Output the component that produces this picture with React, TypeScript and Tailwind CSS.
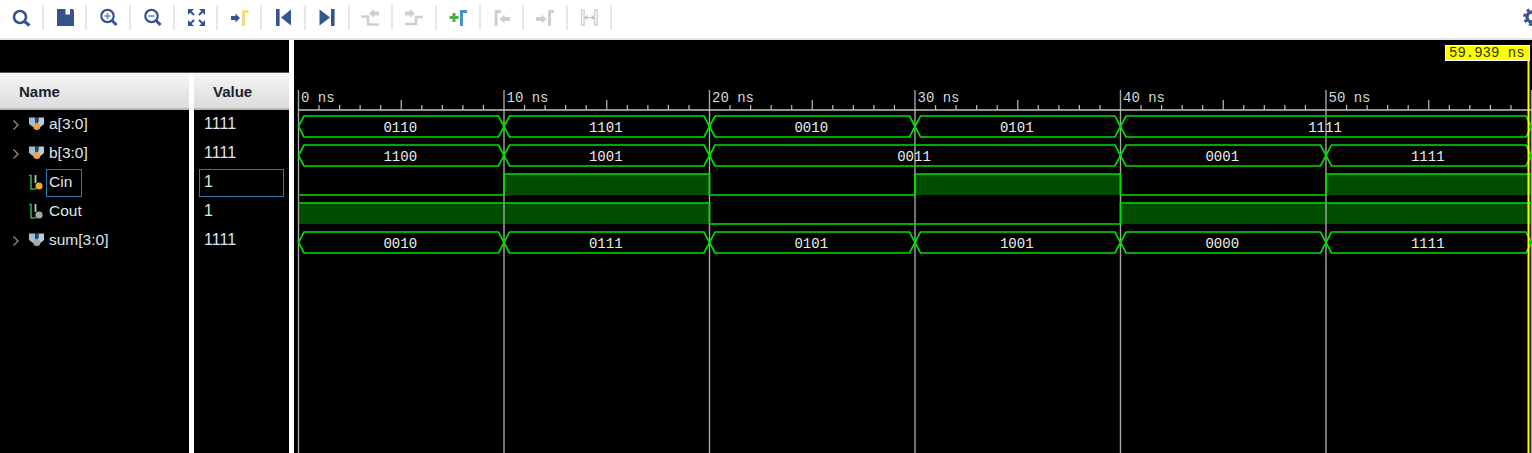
import React from "react";

const BLUE = "#34548f";
const GRAY = "#cfcfcf";

function Ic({ children }: { children: React.ReactNode }) {
  return (
    <svg width="24" height="24" viewBox="0 0 24 24" fill="none" className="block">
      {children}
    </svg>
  );
}

const toolbarIcons: React.ReactNode[] = [
  <Ic>
    <circle cx="11" cy="12" r="6" stroke={BLUE} strokeWidth="2.6" />
    <path d="M15.5 16.5 L20.5 20.5" stroke={BLUE} strokeWidth="3" />
  </Ic>,
  <Ic>
    <path d="M4 4 H20 L21 5.5 V21 H4 Z" fill={BLUE} />
    <rect x="12.5" y="4" width="4.5" height="5.5" fill="#ffffff" />
  </Ic>,
  <Ic>
    <circle cx="11.5" cy="11" r="6.2" stroke={BLUE} strokeWidth="2.2" />
    <path d="M8.5 11 H14.5 M11.5 8 V14" stroke="#6f87b5" strokeWidth="1.6" />
    <path d="M16 15.5 L20.5 20" stroke={BLUE} strokeWidth="3" />
  </Ic>,
  <Ic>
    <circle cx="11.5" cy="11" r="6.2" stroke={BLUE} strokeWidth="2.2" />
    <path d="M8.5 11 H14.5" stroke="#7f93b8" strokeWidth="1.8" />
    <path d="M16 15.5 L20.5 20" stroke={BLUE} strokeWidth="3" />
  </Ic>,
  <Ic>
    <path d="M4 4 H10 L4 10 Z M21 4 H15 L21 10 Z M4 21 H10 L4 15 Z M21 21 H15 L21 15 Z" fill={BLUE} />
    <path d="M6 6 L10 10 M19 6 L15 10 M6 19 L10 15 M19 19 L15 15" stroke={BLUE} strokeWidth="2" />
  </Ic>,
  <Ic>
    <path d="M4 11 H8.5 V8.5 L13 13 L8.5 17.5 V15 H4 Z" fill={BLUE} />
    <path d="M16.5 21 V6.5 H21.5" stroke="#eedc88" strokeWidth="3" />
  </Ic>,
  <Ic>
    <rect x="5" y="4" width="3.6" height="17" fill={BLUE} />
    <path d="M20 4.5 V20.5 L10 12.5 Z" fill={BLUE} />
  </Ic>,
  <Ic>
    <path d="M4.5 4.5 V20.5 L15 12.5 Z" fill={BLUE} />
    <rect x="16" y="4" width="3.6" height="17" fill={BLUE} />
  </Ic>,
  <Ic>
    <path d="M3 11.5 H10 V19.5 H21" stroke={GRAY} strokeWidth="2.6" />
    <path d="M21 6.5 H16 V4 L11 8.5 L16 13 V10.5 H21 Z" fill={GRAY} />
  </Ic>,
  <Ic>
    <path d="M3 19 H14 V12 H21" stroke={GRAY} strokeWidth="2.6" />
    <path d="M3 6.5 H8 V4 L13 8.5 L8 13 V10.5 H3 Z" fill={GRAY} />
  </Ic>,
  <Ic>
    <path d="M3.5 12.5 H12.5 M8 8 V17" stroke="#4ab04a" strokeWidth="3" />
    <path d="M15.5 21 V6.5 H21" stroke="#4a93c4" strokeWidth="3" />
  </Ic>,
  <Ic>
    <path d="M7 21 V6.5 H12" stroke={GRAY} strokeWidth="3" />
    <path d="M21 12 H15.5 V9.5 L10.5 14 L15.5 18.5 V16 H21 Z" fill={GRAY} />
  </Ic>,
  <Ic>
    <path d="M3 12 H8.5 V9.5 L13.5 14 L8.5 18.5 V16 H3 Z" fill={GRAY} />
    <path d="M16.5 21 V6.5 H21" stroke={GRAY} strokeWidth="3" />
  </Ic>,
  <Ic>
    <rect x="4.5" y="5" width="2.6" height="15" stroke={GRAY} strokeWidth="1.4" />
    <rect x="17.5" y="5" width="2.6" height="15" stroke={GRAY} strokeWidth="1.4" />
    <path d="M8 12.5 H17 M8 12.5 L10.5 10.5 M8 12.5 L10.5 14.5 M17 12.5 L14.5 10.5 M17 12.5 L14.5 14.5" stroke="#c0c0c0" strokeWidth="1.1" />
  </Ic>,
];

function BusIcon({ dot }: { dot: string }) {
  return (
    <svg width="17" height="18" viewBox="0 0 17 18" className="block">
      <path d="M1 1.5 H7.2 V5 L8 9 L5 11 L1 8 Z" fill="#9cc0da" />
      <path d="M16 1.5 H10.4 V5 L9.6 9 L12.5 11 L16 8 Z" fill="#b4cfe2" />
      <path d="M7.2 1.5 H10.4 V5 L9.6 8 H8 L7.2 5 Z" fill="#2c4a60" />
      <circle cx="8.8" cy="10.5" r="3.5" fill={dot} />
    </svg>
  );
}

function WireIcon({ dot }: { dot: string }) {
  return (
    <svg width="17" height="18" viewBox="0 0 17 18" className="block">
      <path d="M1 1.5 H3 V15 H8" stroke="#35a845" strokeWidth="1.6" fill="none" />
      <path d="M7.5 1 V9" stroke="#a8d8aa" strokeWidth="1.8" fill="none" />
      <circle cx="11" cy="12" r="3.6" fill={dot} />
    </svg>
  );
}

function Chevron() {
  return (
    <svg width="8" height="12" viewBox="0 0 8 12" className="block">
      <path d="M1.5 1.5 L6 6 L1.5 10.5" stroke="#8a8a8a" strokeWidth="1.4" fill="none" />
    </svg>
  );
}

const ORANGE = "#f2a23a";
const SILVER = "#a8a8a8";

const signals = [
  { name: "a[3:0]", value: "1111", bus: true, dot: ORANGE },
  { name: "b[3:0]", value: "1111", bus: true, dot: ORANGE },
  { name: "Cin", value: "1", bus: false, dot: ORANGE, selected: true },
  { name: "Cout", value: "1", bus: false, dot: SILVER },
  { name: "sum[3:0]", value: "1111", bus: true, dot: SILVER },
];

const X0 = 298.5;
const PX = 20.55;
const LINE = "#00e000";
const tx = (ns: number) => X0 + ns * PX;

function Bus({ top, segs }: { top: number; segs: [number, number, string][] }) {
  const bot = top + 21;
  const mid = top + 10.5;
  return (
    <g>
      {segs.map(([a, b, label]) => {
        const l = tx(a);
        const r = tx(b);
        return (
          <g key={a}>
            <path
              d={`M${l} ${mid} L${l + 5.5} ${top} H${r - 5.5} L${r} ${mid} L${r - 5.5} ${bot} H${l + 5.5} Z`}
              stroke={LINE}
              strokeWidth="1.7"
              fill="none"
            />
            <text
              x={(l + r) / 2 - 1}
              y={top + 15.5}
              textAnchor="middle"
              fill="#eeeeee"
              className="text-[14px] [font-family:'Liberation_Mono',monospace]"
            >
              {label}
            </text>
          </g>
        );
      })}
    </g>
  );
}

function Bit({ top, segs }: { top: number; segs: [number, number, number][] }) {
  const low = top + 21;
  let d = "";
  segs.forEach(([a, b, v], i) => {
    const y = v ? top : low;
    d += `${i === 0 ? "M" : "L"}${tx(a)} ${y} L${tx(b)} ${y} `;
  });
  return <path d={d} stroke={LINE} strokeWidth="1.7" fill="none" />;
}

function BitFill({ top, segs }: { top: number; segs: [number, number, number][] }) {
  return (
    <g>
      {segs
        .filter((s) => s[2])
        .map(([a, b]) => (
          <rect key={a} x={tx(a)} y={top} width={tx(b) - tx(a)} height="21" fill="#004d00" />
        ))}
    </g>
  );
}

const cin: [number, number, number][] = [
  [0, 10, 0],
  [10, 20, 1],
  [20, 30, 0],
  [30, 40, 1],
  [40, 50, 0],
  [50, 60.2, 1],
];
const cout: [number, number, number][] = [
  [0, 20, 1],
  [20, 40, 0],
  [40, 60.2, 1],
];

function Wave() {
  const minor: number[] = [];
  for (let i = 0; i <= 60; i++) minor.push(i);
  return (
    <svg viewBox="294 40 1238 413" width="1238" height="413" className="block">
      <BitFill top={174} segs={cin} />
      <BitFill top={203} segs={cout} />
      {[0, 10, 20, 30, 40, 50, 60].map((n) => (
        <line key={n} x1={tx(n)} x2={tx(n)} y1="90" y2="453" stroke="#a6a6a6" strokeWidth="1.4" />
      ))}
      <line x1={X0} x2="1532" y1="110" y2="110" stroke="#c4c4c4" strokeWidth="1.6" />
      {minor
        .filter((i) => i % 10 !== 0)
        .map((i) => (
          <line
            key={i}
            x1={tx(i)}
            x2={tx(i)}
            y1={i % 5 === 0 ? 100 : 105}
            y2="110"
            stroke="#bdbdbd"
            strokeWidth="1.2"
          />
        ))}
      {[0, 10, 20, 30, 40, 50].map((n) => (
        <text
          key={n}
          x={tx(n) + 2.5}
          y="102"
          fill="#d8d8d8"
          className="text-[14px] [font-family:'Liberation_Mono',monospace]"
        >
          {n} ns
        </text>
      ))}
      <Bus
        top={116}
        segs={[
          [0, 10, "0110"],
          [10, 20, "1101"],
          [20, 30, "0010"],
          [30, 40, "0101"],
          [40, 60, "1111"],
        ]}
      />
      <Bus
        top={145}
        segs={[
          [0, 10, "1100"],
          [10, 20, "1001"],
          [20, 40, "0011"],
          [40, 50, "0001"],
          [50, 60, "1111"],
        ]}
      />
      <Bit top={174} segs={cin} />
      <Bit top={203} segs={cout} />
      <Bus
        top={232}
        segs={[
          [0, 10, "0010"],
          [10, 20, "0111"],
          [20, 30, "0101"],
          [30, 40, "1001"],
          [40, 50, "0000"],
          [50, 60, "1111"],
        ]}
      />
      <line x1="1528.5" x2="1528.5" y1="58" y2="453" stroke="#ffff00" strokeWidth="2" />
      <rect x="1445.5" y="45.5" width="84" height="15" fill="#ffff00" stroke="#ffffff" strokeWidth="1" />
      <text
        x="1449"
        y="57"
        fill="#333300"
        className="text-[14px] [font-family:'Liberation_Mono',monospace]"
      >
        59.939 ns
      </text>
    </svg>
  );
}

export default function App() {
  return (
    <div className="flex h-[453px] w-full flex-col overflow-hidden bg-black [font-family:'Liberation_Sans',Arial,sans-serif]">
      <div className="flex h-[40px] shrink-0 items-start justify-between border-b-2 border-[#e2e2e2] bg-white pt-[5px]">
        <div className="flex">
          {toolbarIcons.map((icon, i) => (
            <div
              key={i}
              className="flex h-[25px] w-[43.7px] items-start justify-center border-r-2 border-[#e8e8e8]"
            >
              {icon}
            </div>
          ))}
        </div>
        <div className="mt-[3px] w-[9px] overflow-hidden">
          <svg width="18" height="18" viewBox="0 0 18 18" className="block">
            <circle cx="9" cy="9" r="5" stroke={BLUE} strokeWidth="3.4" fill="none" />
            <circle cx="9" cy="9" r="7.6" stroke={BLUE} strokeWidth="2.6" strokeDasharray="3 3" fill="none" />
          </svg>
        </div>
      </div>

      <div className="flex min-h-0 flex-1">
        <div className="flex w-[289px] shrink-0 flex-col">
          <div className="h-[33px] shrink-0 border-b border-[#555555] bg-black" />
          <div className="flex min-h-0 flex-1">
            <div className="flex w-[189px] shrink-0 flex-col">
              <div className="flex h-[37px] shrink-0 items-center border-b-2 border-[#b8b8b8] bg-gradient-to-b from-[#f6f6f6] to-[#dcdcdc] pl-[19px] pt-[3px] text-[15px] font-bold text-[#182232]">
                Name
              </div>
              {signals.map((s) => (
                <div key={s.name} className="flex h-[29px] items-center text-[15.5px] text-[#dfe6ec]">
                  <div className="ml-[12px] flex w-[16px] shrink-0 items-center">
                    {s.bus ? <Chevron /> : null}
                  </div>
                  <div className="w-[18px] shrink-0">
                    {s.bus ? <BusIcon dot={s.dot} /> : <WireIcon dot={s.dot} />}
                  </div>
                  <div
                    className={`flex h-[28px] min-w-[36px] items-center border px-[2px] pb-[1px] ${
                      s.selected ? "border-[#2e78aa]" : "border-transparent"
                    }`}
                  >
                    {s.name}
                  </div>
                </div>
              ))}
            </div>
            <div className="w-[5px] shrink-0 bg-white" />
            <div className="flex min-w-0 flex-1 flex-col">
              <div className="flex h-[37px] shrink-0 items-center border-b-2 border-[#b8b8b8] bg-gradient-to-b from-[#f6f6f6] to-[#dcdcdc] pl-[19px] pt-[3px] text-[15px] font-bold text-[#182232]">
                Value
              </div>
              {signals.map((s) => (
                <div key={s.name} className="flex h-[29px] items-center pl-[5px] text-[16px] text-[#dfe6ec]">
                  <div
                    className={`flex h-[28px] w-[85px] items-center border pb-[1px] pl-[4px] ${
                      s.selected ? "border-[#2e78aa]" : "border-transparent"
                    }`}
                  >
                    {s.value}
                  </div>
                </div>
              ))}
            </div>
          </div>
        </div>
        <div className="w-[5px] shrink-0 bg-white" />
        <div className="min-w-0 flex-1">
          <Wave />
        </div>
      </div>
    </div>
  );
}
